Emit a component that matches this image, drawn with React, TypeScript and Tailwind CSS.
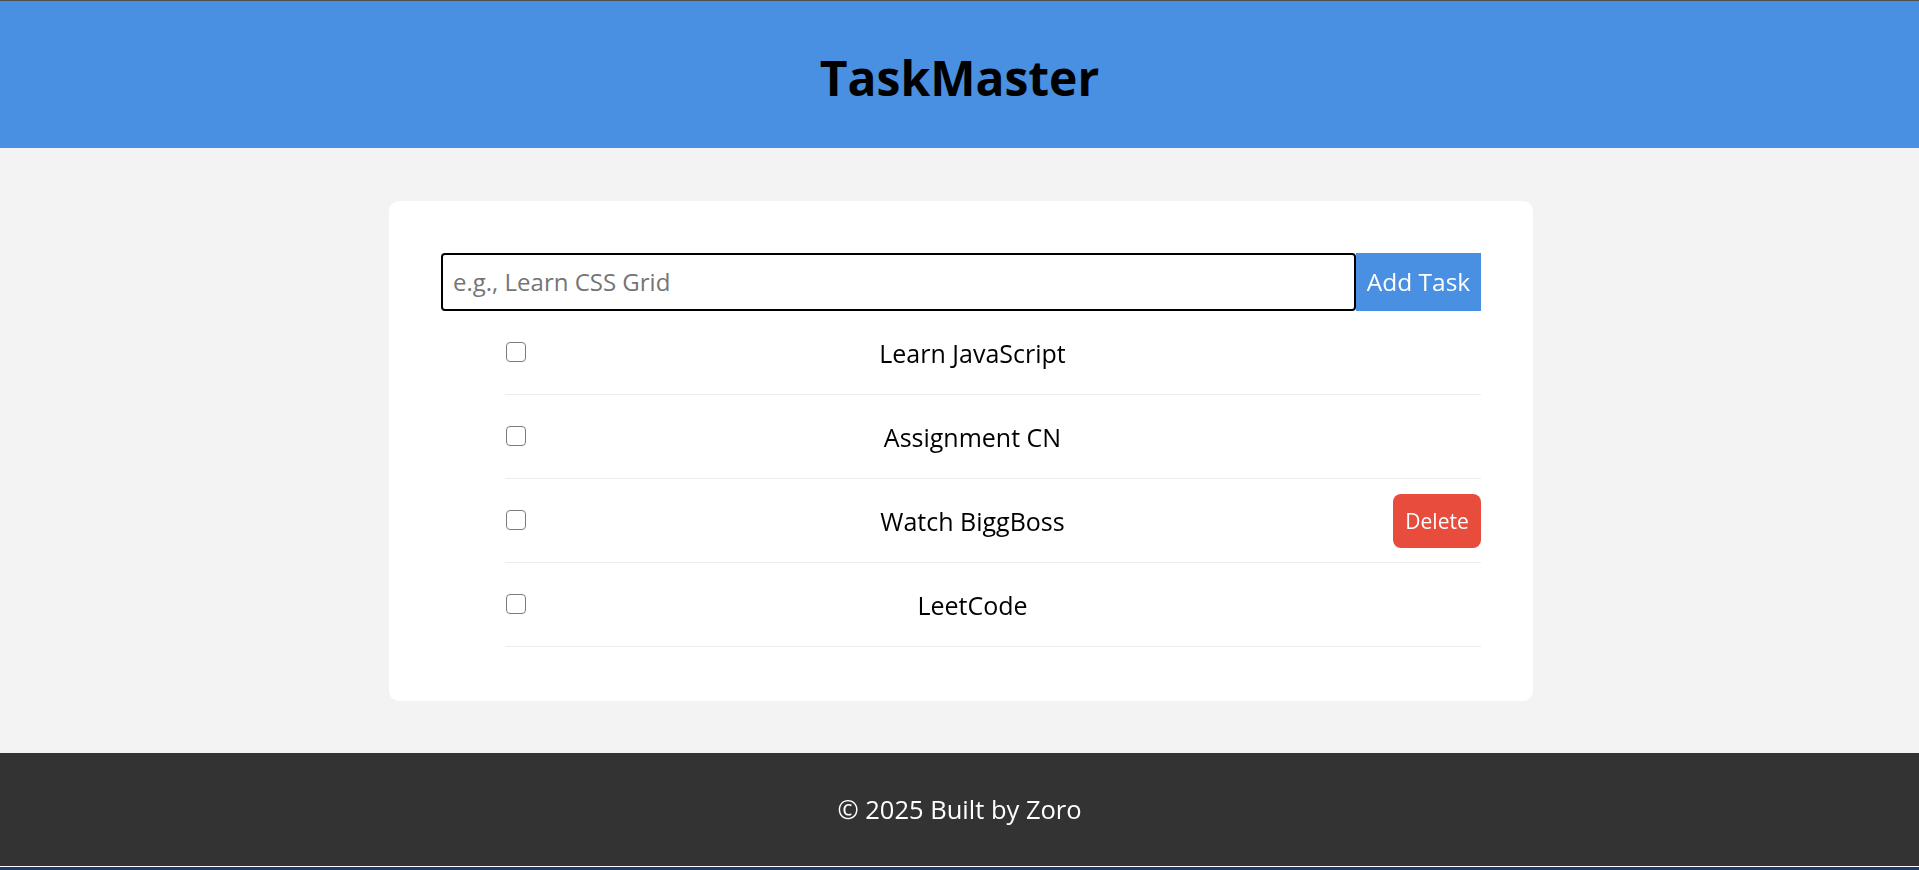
import React, { useState } from "react";

interface Task {
  id: number;
  text: string;
  done: boolean;
}

const initialTasks: Task[] = [
  { id: 1, text: "Learn JavaScript", done: false },
  { id: 2, text: "Assignment CN", done: false },
  { id: 3, text: "Watch BiggBoss", done: false },
  { id: 4, text: "LeetCode", done: false },
];

export default function App() {
  const [tasks, setTasks] = useState<Task[]>(initialTasks);
  const [value, setValue] = useState("");

  const addTask = () => {
    if (!value.trim()) return;
    setTasks([...tasks, { id: Date.now(), text: value.trim(), done: false }]);
    setValue("");
  };

  return (
    <div
      className="flex min-h-[870px] flex-col bg-[#f3f3f3] text-black"
      style={{ fontFamily: '"Open Sans", "Noto Sans", sans-serif' }}
    >
      <header className="flex h-[148px] items-center justify-center border-t border-[#505050] bg-[#4a90e2] pt-[6px]">
        <h1 className="text-[48px] font-bold leading-none">TaskMaster</h1>
      </header>

      <main className="flex-1 pt-[53px] pb-[52px] pl-[3px]">
        <div className="mx-auto w-[1144px] rounded-[10px] bg-white px-[52px] pt-[52px] pb-[54px]">
          <div className="flex h-[58px]">
            <input
              autoFocus
              value={value}
              onChange={(e) => setValue(e.target.value)}
              placeholder="e.g., Learn CSS Grid"
              className="flex-1 rounded-[4px] border-2 border-black px-[10px] text-[24px] text-black caret-black outline-none placeholder:text-[#757575]"
            />
            <button
              onClick={addTask}
              className="w-[125px] bg-[#4a90e2] text-[24.5px] text-white"
            >
              Add Task
            </button>
          </div>

          <ul className="ml-[64px]">
            {tasks.map((t) => (
              <li
                key={t.id}
                className="group flex h-[84px] items-center border-b border-[#ececec]"
              >
                <input
                  type="checkbox"
                  checked={t.done}
                  onChange={() =>
                    setTasks(tasks.map((x) => (x.id === t.id ? { ...x, done: !x.done } : x)))
                  }
                  className="mx-[1px] mb-[2px] h-[20px] w-[20px] shrink-0 appearance-none rounded-[4px] border-[1.5px] border-[#7a7a7a] bg-white checked:bg-[#4a90e2]"
                />
                <span
                  className={`ml-[25px] flex-1 pt-[2px] text-center text-[25px] ${
                    t.done ? "line-through text-gray-400" : ""
                  }`}
                >
                  {t.text}
                </span>
                <button
                  onClick={() => setTasks(tasks.filter((x) => x.id !== t.id))}
                  className={`h-[54px] w-[88px] shrink-0 rounded-[8px] bg-[#e74c3c] pt-[3px] text-[21px] text-white ${
                    t.id === 3 ? "visible" : "invisible"
                  }`}
                >
                  Delete
                </button>
              </li>
            ))}
          </ul>
        </div>
      </main>

      <footer className="flex h-[113px] items-center justify-center bg-[#333333] text-[25.5px] text-white">
        © 2025 Built by Zoro
      </footer>
      <div className="h-[4px] border-t border-white bg-[#1f3a6b]" />
    </div>
  );
}
